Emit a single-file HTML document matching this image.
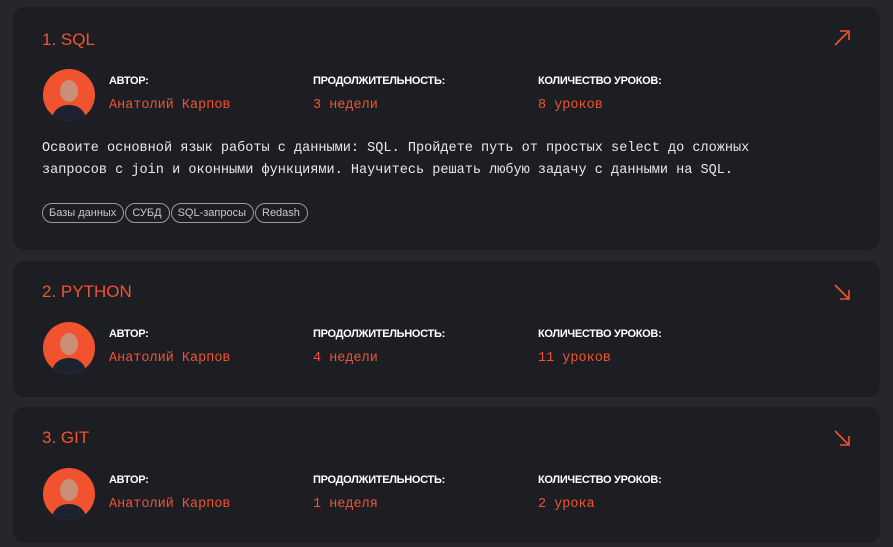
<!DOCTYPE html><html><head><style>
body{margin:0;background:#25272c;width:893px;height:547px;overflow:hidden;font-family:"Liberation Sans",sans-serif}
.card{position:absolute;left:13px;width:867px;background:#1c1e23;border-radius:12px}
.t{position:absolute;left:29px;color:#f2532f;font-size:17px}
.arr{position:absolute;left:820px;width:18px;height:18px}
.av{position:absolute;left:30px;width:52px;height:52px;border-radius:50%;background:#f2532f;overflow:hidden}
.lab{position:absolute;color:#fff;font-size:11px;font-weight:bold;letter-spacing:-0.3px}
.val{position:absolute;color:#f2532f;font-family:"Liberation Mono",monospace;font-size:13.5px}
.desc{position:absolute;left:29px;top:131px;color:#e8e8e8;font-family:"Liberation Mono",monospace;font-size:13.55px;line-height:22px}
.tags{position:absolute;left:29px;top:196px;display:flex;gap:1px}
.tag{border:1px solid #9a9a9a;border-radius:11px;color:#c8c8c8;font-size:11px;padding:3px 7px 3px 6px}
</style></head><body>
<div class="card" style="top:7px;height:243px">
<div class="t" style="top:23px">1. SQL</div>
<svg class="arr" style="top:22px" viewBox="0 0 18 18"><path d="M2 16L16 2M7 2h9v9" stroke="#f2532f" stroke-width="1.6" fill="none"/></svg>
<div class="av" style="top:62px"><svg width="52" height="52"><ellipse cx="26" cy="22" rx="9" ry="11" fill="#c98f78"/><path d="M8 52c2-12 10-16 18-16s16 4 18 16z" fill="#1d2230"/></svg></div>
<div class="lab" style="left:96px;top:68px">АВТОР:</div><div class="val" style="left:96px;top:91px">Анатолий Карпов</div>
<div class="lab" style="left:300px;top:68px">ПРОДОЛЖИТЕЛЬНОСТЬ:</div><div class="val" style="left:300px;top:91px">3 недели</div>
<div class="lab" style="left:525px;top:68px">КОЛИЧЕСТВО УРОКОВ:</div><div class="val" style="left:525px;top:91px">8 уроков</div>
<div class="desc">Освоите основной язык работы с данными: SQL. Пройдете путь от простых select до сложных<br>запросов с join и оконными функциями. Научитесь решать любую задачу с данными на SQL.</div>
<div class="tags"><span class="tag">Базы данных</span><span class="tag">СУБД</span><span class="tag">SQL-запросы</span><span class="tag">Redash</span></div>
</div>
<div class="card" style="top:261px;height:136px">
<div class="t" style="top:21px">2. PYTHON</div>
<svg class="arr" style="top:22px" viewBox="0 0 18 18"><path d="M2 2L16 16M16 7v9h-9" stroke="#f2532f" stroke-width="1.6" fill="none"/></svg>
<div class="av" style="top:61px"><svg width="52" height="52"><ellipse cx="26" cy="22" rx="9" ry="11" fill="#c98f78"/><path d="M8 52c2-12 10-16 18-16s16 4 18 16z" fill="#1d2230"/></svg></div>
<div class="lab" style="left:96px;top:67px">АВТОР:</div><div class="val" style="left:96px;top:90px">Анатолий Карпов</div>
<div class="lab" style="left:300px;top:67px">ПРОДОЛЖИТЕЛЬНОСТЬ:</div><div class="val" style="left:300px;top:90px">4 недели</div>
<div class="lab" style="left:525px;top:67px">КОЛИЧЕСТВО УРОКОВ:</div><div class="val" style="left:525px;top:90px">11 уроков</div>
</div>
<div class="card" style="top:407px;height:136px">
<div class="t" style="top:21px">3. GIT</div>
<svg class="arr" style="top:22px" viewBox="0 0 18 18"><path d="M2 2L16 16M16 7v9h-9" stroke="#f2532f" stroke-width="1.6" fill="none"/></svg>
<div class="av" style="top:61px"><svg width="52" height="52"><ellipse cx="26" cy="22" rx="9" ry="11" fill="#c98f78"/><path d="M8 52c2-12 10-16 18-16s16 4 18 16z" fill="#1d2230"/></svg></div>
<div class="lab" style="left:96px;top:67px">АВТОР:</div><div class="val" style="left:96px;top:90px">Анатолий Карпов</div>
<div class="lab" style="left:300px;top:67px">ПРОДОЛЖИТЕЛЬНОСТЬ:</div><div class="val" style="left:300px;top:90px">1 неделя</div>
<div class="lab" style="left:525px;top:67px">КОЛИЧЕСТВО УРОКОВ:</div><div class="val" style="left:525px;top:90px">2 урока</div>
</div>
</body></html>
